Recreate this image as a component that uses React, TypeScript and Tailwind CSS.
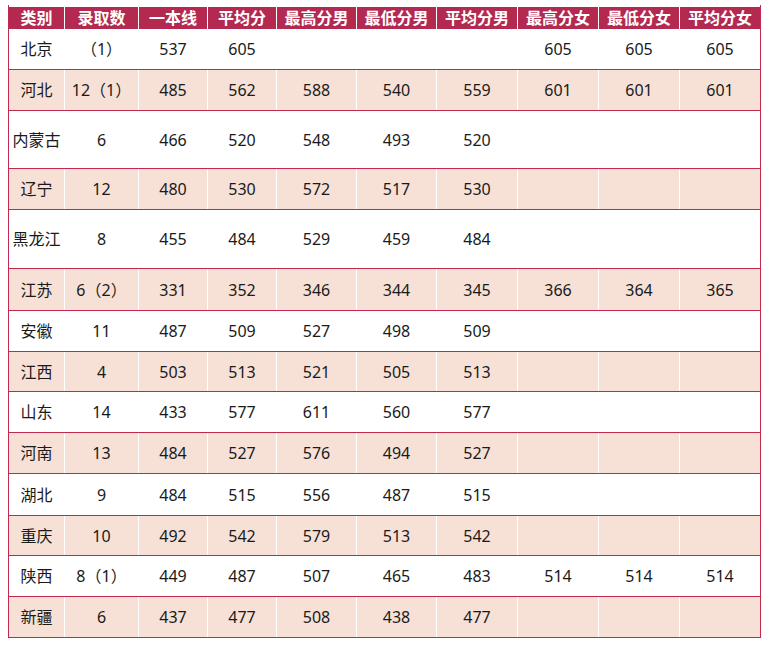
const cols = 'grid grid-cols-[56px_74px_69px_69px_80px_80px_81px_81px_81px_80px]'

const headers = ['类别', '录取数', '一本线', '平均分', '最高分男', '最低分男', '平均分男', '最高分女', '最低分女', '平均分女']

type Row = { h: string; cells: string[] }

const rows: Row[] = [
  { h: 'h-[41px]', cells: ['北京', '（1）', '537', '605', '', '', '', '605', '605', '605'] },
  { h: 'h-[41px]', cells: ['河北', '12（1）', '485', '562', '588', '540', '559', '601', '601', '601'] },
  { h: 'h-[58px]', cells: ['内蒙古', '6', '466', '520', '548', '493', '520', '', '', ''] },
  { h: 'h-[41px]', cells: ['辽宁', '12', '480', '530', '572', '517', '530', '', '', ''] },
  { h: 'h-[59px]', cells: ['黑龙江', '8', '455', '484', '529', '459', '484', '', '', ''] },
  { h: 'h-[42px]', cells: ['江苏', '6（2）', '331', '352', '346', '344', '345', '366', '364', '365'] },
  { h: 'h-[41px]', cells: ['安徽', '11', '487', '509', '527', '498', '509', '', '', ''] },
  { h: 'h-[40px]', cells: ['江西', '4', '503', '513', '521', '505', '513', '', '', ''] },
  { h: 'h-[41px]', cells: ['山东', '14', '433', '577', '611', '560', '577', '', '', ''] },
  { h: 'h-[41px]', cells: ['河南', '13', '484', '527', '576', '494', '527', '', '', ''] },
  { h: 'h-[42px]', cells: ['湖北', '9', '484', '515', '556', '487', '515', '', '', ''] },
  { h: 'h-[40px]', cells: ['重庆', '10', '492', '542', '579', '513', '542', '', '', ''] },
  { h: 'h-[41px]', cells: ['陕西', '8（1）', '449', '487', '507', '465', '483', '514', '514', '514'] },
  { h: 'h-[41px]', cells: ['新疆', '6', '437', '477', '508', '438', '477', '', '', ''] },
]

export default function App() {
  return (
    <div
      className="min-h-[647px] w-[769px] bg-white pl-[8px] pt-[5px]"
      style={{ fontFamily: '"Noto Sans", "Noto Sans CJK SC", sans-serif' }}
    >
      <div className="w-[753px] border-x border-[#c02a50] pt-[2px]">
        <div className={`${cols} h-[22px] pr-[1px]`}>
          {headers.map((t, i) => (
            <div
              key={t}
              className={`flex items-center justify-center bg-[#b3294f] text-[16px] font-bold leading-none text-white ${
                i < headers.length - 1 ? 'border-r border-white' : ''
              }`}
            >
              {t}
            </div>
          ))}
        </div>

        {rows.map((r, ri) => (
          <div
            key={r.cells[0]}
            className={`${cols} ${r.h} border-b border-[#c02a50] ${ri % 2 === 1 ? 'bg-[#f7e1d7]' : 'bg-white'}`}
          >
            {r.cells.map((c, ci) => (
              <div
                key={ci}
                className={`flex items-center justify-center text-[16px] leading-none text-[#1a1a1a] ${
                  ci < r.cells.length - 1 ? 'border-r border-white' : ''
                }`}
              >
                {c}
              </div>
            ))}
          </div>
        ))}
      </div>
    </div>
  )
}
